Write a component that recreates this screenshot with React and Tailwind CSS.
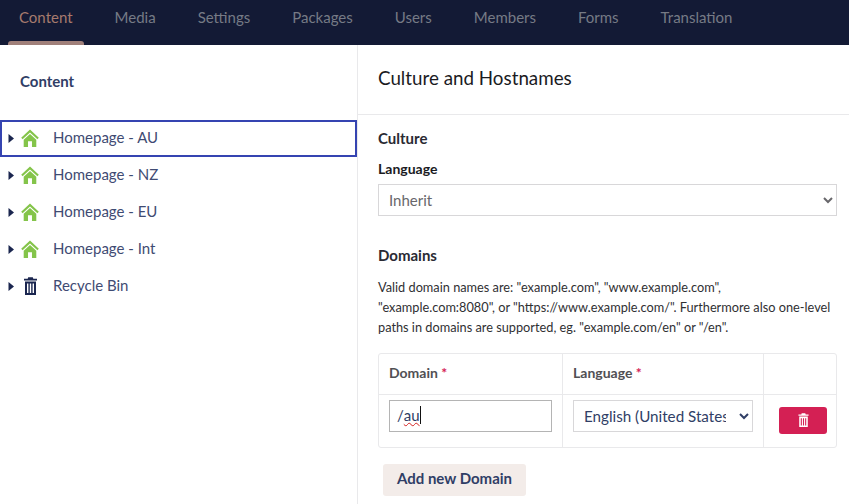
const tabs = ["Content", "Media", "Settings", "Packages", "Users", "Members", "Forms", "Translation"];

function Home() {
  return (
    <svg width="18" height="18" viewBox="0 0 20 20" className="shrink-0">
      <path fill="#84c44a" d="M10 0.5 L19.8 9.8 L18.2 11.5 L10 3.8 L1.8 11.5 L0.2 9.8 Z" />
      <path fill="#84c44a" d="M10 5.5 L17 12 V20 H12.2 V13.5 H7.8 V20 H3 V12 Z" />
    </svg>
  );
}

function Trash({ color = "#1b264f", width = 13, height = 18 }) {
  return (
    <svg width={width} height={height} viewBox="0 0 13 18" className="shrink-0">
      <path fill={color} d="M4.2 0.3 H8.8 L9.3 1.8 H13 V3.6 H0 V1.8 H3.7 Z" />
      <path fill={color} fillRule="evenodd" d="M1 4.6 H12 V18 H1 Z M3 6.6 V16 H4.4 V6.6 Z M5.8 6.6 V16 H7.2 V6.6 Z M8.6 6.6 V16 H10 V6.6 Z" />
    </svg>
  );
}

function Row({ label, selected, icon }) {
  return (
    <div className={`flex h-[37px] items-center pb-[1px] ${selected ? "border-2 border-[#3544b1] pl-[6px]" : "pl-[8px]"}`}>
      <svg width="6" height="9" viewBox="0 0 6 9" className="shrink-0">
        <path d="M0.5 0 L6 4.5 L0.5 9 Z" fill="#1b264f" />
      </svg>
      <span className="mr-[7px] flex w-[32px] justify-center">{icon}</span>
      <span className="pb-[1px] text-[15px] text-[#3f4b73]">{label}</span>
    </div>
  );
}

export default function App() {
  return (
    <div className="flex h-[504px] w-[849px] flex-col overflow-hidden bg-white font-['Lato',sans-serif]">
      <header className="flex h-[45px] shrink-0 bg-[#131a35] pl-[8px]">
        {tabs.map((t, i) => (
          <div key={t} className={`relative flex h-full items-center pb-[11px] text-[15px] ${i === 0 ? "mr-[10px] px-[11px] text-[#a67a6e]" : "px-[21px] text-[#767a85]"}`}>
            {t}
            {i === 0 && <span className="absolute bottom-0 left-0 right-0 h-[4px] rounded-t-[3px] bg-[#a0807a]" />}
          </div>
        ))}
      </header>
      <div className="flex min-h-0 flex-1">
        <aside className="w-[358px] shrink-0 border-r border-[#e9e9eb]">
          <div className="flex h-[75px] items-start pl-[20px] pt-[27px] text-[15px] font-bold leading-[18px] text-[#303e66]">Content</div>
          <Row label="Homepage - AU" selected icon={<Home />} />
          <Row label="Homepage - NZ" icon={<Home />} />
          <Row label="Homepage - EU" icon={<Home />} />
          <Row label="Homepage - Int" icon={<Home />} />
          <Row label="Recycle Bin" icon={<Trash />} />
        </aside>
        <main className="min-w-0 flex-1">
          <div className="flex h-[70px] items-start border-b border-[#e9e9eb] pl-[20px] pt-[20px] text-[18.8px] leading-[26px] text-[#1b1b1f]">Culture and Hostnames</div>
          <div className="pl-[20px] pr-[12px]">
            <div className="pt-[14px] text-[15px] font-bold leading-[18px] text-[#2a2a33]">Culture</div>
            <div className="pt-[13px] text-[14px] font-bold leading-[18px] text-[#1b1b1f]">Language</div>
            <select className="mt-[6px] h-[32px] w-full rounded-none border border-[#d8d7d9] bg-white pl-[6px] text-[15px] text-[#68676b] outline-none">
              <option>Inherit</option>
            </select>
            <div className="pt-[30px] text-[15px] font-bold leading-[18px] text-[#2a2a33]">Domains</div>
            <p className="whitespace-nowrap pt-[13px] text-[12.75px] leading-[20px] text-[#303033]">
              Valid domain names are: "example.com", "www.example.com",<br />
              "example.com:8080", or "https://www.example.com/". Furthermore also one-level<br />
              paths in domains are supported, eg. "example.com/en" or "/en".
            </p>
            <table className="mt-[16px] w-[459px] table-fixed border-separate border-spacing-0 rounded-[3px] border border-[#e9e9eb]">
              <colgroup>
                <col className="w-[184px]" />
                <col className="w-[201px]" />
                <col />
              </colgroup>
              <thead>
                <tr className="h-[41px] text-left text-[14px] font-bold text-[#515054]">
                  <th className="border-b border-r border-[#e9e9eb] pb-[3px] pl-[10px] font-bold">Domain <span className="text-[#d42054]">*</span></th>
                  <th className="border-b border-r border-[#e9e9eb] pb-[3px] pl-[10px] font-bold">Language <span className="text-[#d42054]">*</span></th>
                  <th className="border-b border-[#e9e9eb]" />
                </tr>
              </thead>
              <tbody>
                <tr className="h-[52px]">
                  <td className="border-r border-[#e9e9eb] pb-[15px] pl-[10px] pt-[5px]">
                    <div className="flex h-[32px] w-[163px] items-center border border-[#b4b4b4] pb-[2px] pl-[7px] text-[15px] text-[#303e66]">
                      /<span className="underline decoration-[#d42020] decoration-wavy decoration-1">au</span><span className="h-[18px] w-px bg-[#111]" />
                    </div>
                  </td>
                  <td className="border-r border-[#e9e9eb] pb-[15px] pl-[10px] pt-[5px]">
                    <select className="h-[32px] w-[180px] rounded-none border border-[#d8d7d9] bg-white pl-[6px] pr-[10px] text-[15.2px] text-[#303e66] outline-none">
                      <option>English (United States)</option>
                    </select>
                  </td>
                  <td className="pb-[2px] pl-[15px]">
                    <button className="flex h-[27px] w-[48px] items-center justify-center rounded-[3px] bg-[#d42054]">
                      <Trash color="#ffffff" width={11} height={14} />
                    </button>
                  </td>
                </tr>
              </tbody>
            </table>
            <button className="ml-[5px] mt-[16px] h-[32px] w-[143px] rounded-[3px] bg-[#f3ece9] pb-[3px] text-[15px] font-bold text-[#303e66]">Add new Domain</button>
          </div>
        </main>
      </div>
    </div>
  );
}
